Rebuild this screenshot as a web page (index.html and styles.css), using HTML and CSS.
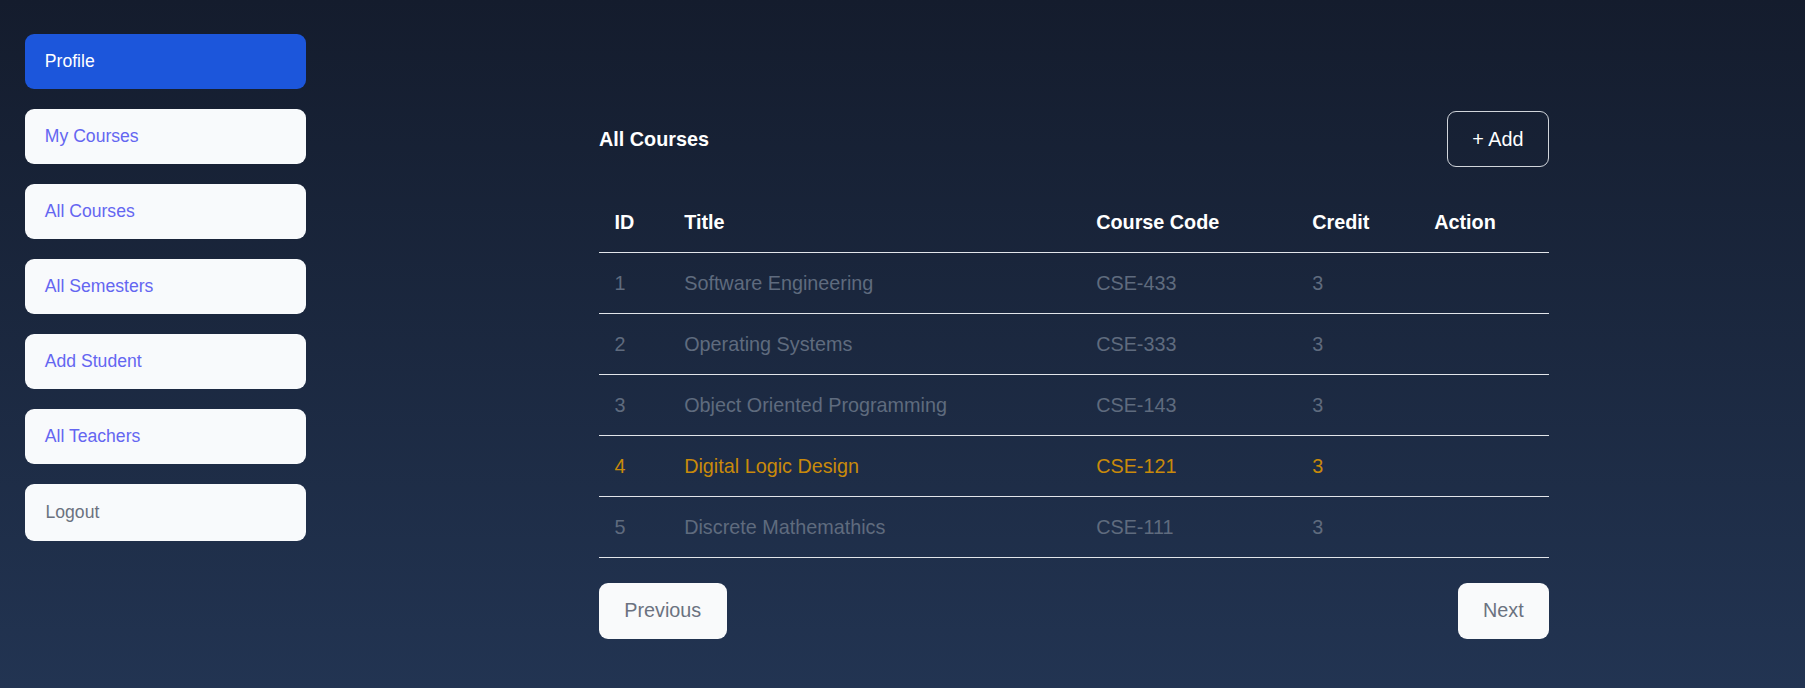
FILE: index.html
```html
<!DOCTYPE html>
<html lang="en">
<head>
<meta charset="utf-8">
<title>All Courses</title>
<link rel="stylesheet" href="styles.css">
</head>
<body>
<div class="layout">
  <nav class="sidebar">
    <a class="nav-item active" href="#">Profile</a>
    <a class="nav-item" href="#">My Courses</a>
    <a class="nav-item" href="#">All Courses</a>
    <a class="nav-item" href="#">All Semesters</a>
    <a class="nav-item" href="#">Add Student</a>
    <a class="nav-item" href="#">All Teachers</a>
    <button class="nav-item logout" type="button">Logout</button>
  </nav>
  <main class="main">
    <div class="title-row">
      <h2 class="title">All Courses</h2>
      <button class="add-btn" type="button">+ Add</button>
    </div>
    <table class="courses">
      <colgroup>
        <col class="c-id"><col class="c-title"><col class="c-code"><col class="c-credit"><col class="c-action">
      </colgroup>
      <thead>
        <tr><th>ID</th><th>Title</th><th>Course Code</th><th>Credit</th><th>Action</th></tr>
      </thead>
      <tbody>
        <tr><td>1</td><td>Software Engineering</td><td>CSE-433</td><td>3</td><td></td></tr>
        <tr><td>2</td><td>Operating Systems</td><td>CSE-333</td><td>3</td><td></td></tr>
        <tr><td>3</td><td>Object Oriented Programming</td><td>CSE-143</td><td>3</td><td></td></tr>
        <tr class="highlight"><td>4</td><td>Digital Logic Design</td><td>CSE-121</td><td>3</td><td></td></tr>
        <tr><td>5</td><td>Discrete Mathemathics</td><td>CSE-111</td><td>3</td><td></td></tr>
      </tbody>
    </table>
    <div class="pager">
      <button class="page-btn" type="button">Previous</button>
      <button class="page-btn" type="button">Next</button>
    </div>
  </main>
</div>
</body>
</html>
```
FILE: styles.css
```css
* { box-sizing: border-box; }
html, body { margin: 0; padding: 0; }
body {
  min-height: 688px;
  background: linear-gradient(to bottom, #141c2d 0%, #223452 100%);
  font-family: "Liberation Sans", Arial, sans-serif;
  color: #ffffff;
}
.layout {
  display: flex;
  align-items: flex-start;
  min-height: 688px;
}
.sidebar {
  display: flex;
  flex-direction: column;
  gap: 20px;
  width: 306px;
  padding: 34px 0 0 25px;
}
.nav-item {
  display: block;
  width: 281px;
  height: 55px;
  padding: 0 19.8px;
  line-height: 55px;
  font-family: inherit;
  font-size: 17.6px;
  text-align: left;
  text-decoration: none;
  color: #6466f1;
  background: #f8fafc;
  border: 0;
  border-radius: 9px;
}
.nav-item.active {
  background: #1c56db;
  color: #ffffff;
}
.nav-item.logout {
  height: 57px;
  line-height: 57px;
  padding-left: 20.5px;
  color: #6b7280;
}
.main {
  width: 950px;
  margin-left: 293px;
  padding-top: 111px;
}
.title-row {
  display: flex;
  align-items: center;
  justify-content: space-between;
}
.title {
  margin: 0;
  font-size: 19.8px;
  font-weight: 700;
}
.add-btn {
  height: 56px;
  padding: 0 24.5px;
  font-family: inherit;
  font-size: 19.8px;
  color: #ffffff;
  background: transparent;
  border: 1px solid #d1d5db;
  border-radius: 9px;
}
.courses {
  width: 950px;
  margin-top: 24px;
  border-collapse: collapse;
  table-layout: fixed;
  font-size: 19.8px;
}
.c-id { width: 72px; }
.c-title { width: 412px; }
.c-code { width: 216px; }
.c-credit { width: 122px; }
.c-action { width: 128px; }
.courses th,
.courses td {
  height: 61px;
  padding: 2px 13.2px 0;
  text-align: left;
  vertical-align: middle;
  border-bottom: 1px solid #e2e5ea;
}
.courses th:first-child,
.courses td:first-child {
  padding-left: 15.5px;
}
.courses th {
  font-weight: 700;
  color: #ffffff;
}
.courses td {
  font-weight: 400;
  color: #5f6b7e;
}
.courses tr.highlight td {
  color: #c98a0a;
}
.pager {
  display: flex;
  justify-content: space-between;
  margin-top: 25px;
}
.page-btn {
  height: 56px;
  padding: 0 25.3px;
  font-family: inherit;
  font-size: 19.8px;
  color: #6b7280;
  background: #f9fafb;
  border: 0;
  border-radius: 9px;
}
```
